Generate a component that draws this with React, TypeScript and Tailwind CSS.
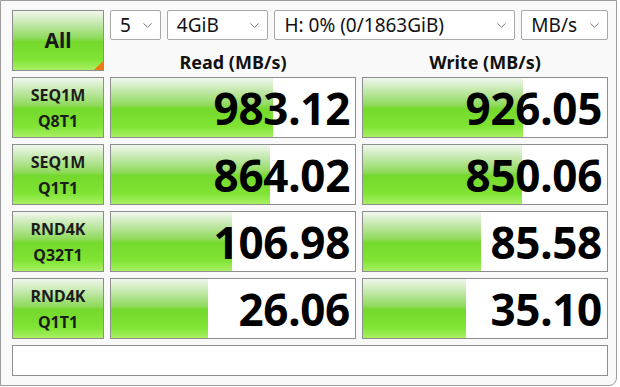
import { ChevronDown } from "lucide-react";

type Row = {
  name: string;
  sub: string;
  read: string;
  write: string;
  readFill: number; // px of green inside the 244px cell
  writeFill: number;
};

const rows: Row[] = [
  { name: "SEQ1M", sub: "Q8T1", read: "983.12", write: "926.05", readFill: 162, writeFill: 160 },
  { name: "SEQ1M", sub: "Q1T1", read: "864.02", write: "850.06", readFill: 159, writeFill: 159 },
  { name: "RND4K", sub: "Q32T1", read: "106.98", write: "85.58", readFill: 121, writeFill: 118 },
  { name: "RND4K", sub: "Q1T1", read: "26.06", write: "35.10", readFill: 97, writeFill: 103 },
];

const green =
  "bg-[linear-gradient(to_bottom,#f1f7ee_0%,#c2e8aa_22%,#8fda5c_46%,#74d92c_52%,#7fe433_82%,#a9f064_100%)]";

function Select({ label, width }: { label: string; width: string }) {
  return (
    <div
      className={`${width} h-[30px] flex items-center justify-between bg-white border border-[#a8a8a8] rounded-[2px] pl-[9px] pr-[5px] text-[19px] text-[#111]`}
    >
      <span className="leading-none">{label}</span>
      <ChevronDown size={15} strokeWidth={1.3} className="text-[#555]" />
    </div>
  );
}

function ResultCell({ value, fill }: { value: string; fill: number }) {
  return (
    <div className="relative h-[61px] bg-white border border-[#8e8e8e] overflow-hidden">
      <div className={`absolute left-0 top-0 bottom-0 ${green}`} style={{ width: fill }} />
      <div className="relative h-full flex items-center justify-end pr-[5px] text-[44px] font-bold text-black leading-none tracking-[-0.3px]">
        {value}
      </div>
    </div>
  );
}

export default function App() {
  return (
    <div className="w-[620px] h-[387px] bg-white font-['Noto_Sans',sans-serif]">
      <div className="w-[617px] h-[386px] bg-[#f9f9f9] border border-[#9c9c9c] rounded-br-[8px] pl-[11px] pt-[9px]">
        <div className="grid grid-cols-[92px_246px_246px] gap-[6px]">
          <button
            className={`relative h-[61px] border border-[#8e8e8e] ${green} text-[21px] font-bold text-[#1a1a1a] overflow-hidden`}
          >
            All
            <span className="absolute right-0 bottom-0 w-0 h-0 border-l-[9px] border-l-transparent border-b-[9px] border-b-[#f07a12]" />
          </button>
          <div className="col-span-2 flex flex-col">
            <div className="flex gap-[6px]">
              <Select label="5" width="w-[51px]" />
              <Select label="4GiB" width="w-[102px]" />
              <Select label="H: 0% (0/1863GiB)" width="w-[242px]" />
              <Select label="MB/s" width="w-[87px]" />
            </div>
            <div className="flex-1 grid grid-cols-2 gap-[6px] items-center text-[18px] font-bold text-[#111] text-center pt-[12px] leading-none">
              <div>Read (MB/s)</div>
              <div>Write (MB/s)</div>
            </div>
          </div>

          {rows.map((r, i) => (
            <div key={i} className="contents">
              <div
                className={`h-[61px] border border-[#8e8e8e] ${green} flex flex-col items-center justify-center text-[16px] font-bold text-[#1c1c1c] leading-[26px]`}
              >
                <span>{r.name}</span>
                <span>{r.sub}</span>
              </div>
              <ResultCell value={r.read} fill={r.readFill} />
              <ResultCell value={r.write} fill={r.writeFill} />
            </div>
          ))}

          <div className="col-span-3 h-[31px] bg-white border border-[#8e8e8e]" />
        </div>
      </div>
    </div>
  );
}
